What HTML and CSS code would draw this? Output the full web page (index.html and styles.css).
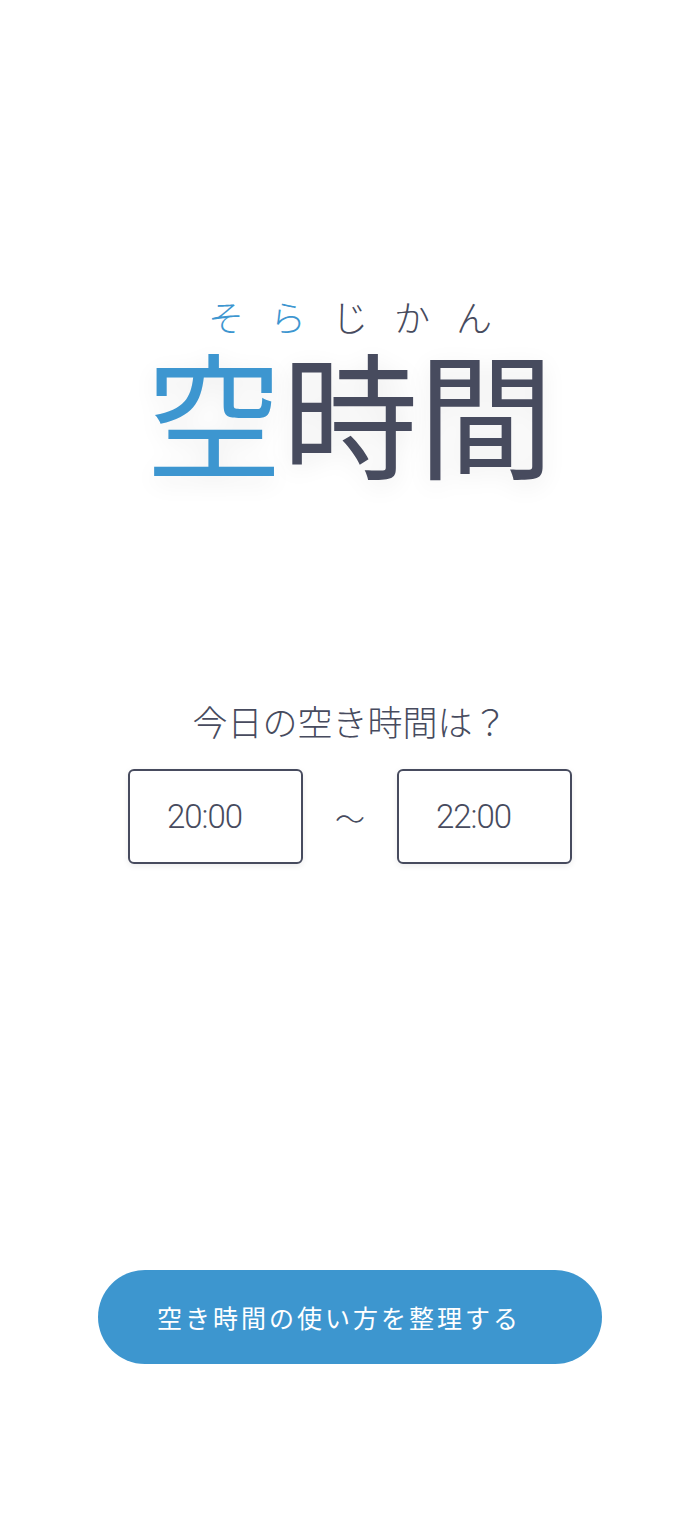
FILE: index.html
```html
<!DOCTYPE html>
<html lang="ja">
<head>
  <meta charset="UTF-8">
  <title>空時間</title>
  <link rel="stylesheet" href="styles.css">
</head>
<body>

<div class="app">
  <div class="logo">
    <div class="logo-kana">
      <span class="accent">そ</span>
      <span class="accent">ら</span>
      <span>じ</span>
      <span>か</span>
      <span>ん</span>
    </div>
    <h1 class="logo-title"><span class="accent">空</span>時間</h1>
  </div>

  <section class="free-time">
    <p class="question">今日の空き時間は？</p>
    <div class="time-range">
      <div class="time-box">20:00</div>
      <span class="tilde">～</span>
      <div class="time-box">22:00</div>
    </div>
  </section>

  <button class="main-btn">空き時間の使い方を整理する</button>
</div>

</body>
</html>
```

FILE: styles.css
```css
body {
  margin: 0;
  padding: 0;
  background-color: #ffffff;
  color: #474b5e;
  font-family: "Noto Sans CJK JP", "Noto Sans", sans-serif;
}

.app {
  display: flex;
  flex-direction: column;
  align-items: center;
  min-height: 100vh;
  box-sizing: border-box;
  padding-top: 292px;
}

.accent {
  color: #3d96d0;
}

.logo {
  text-align: center;
}

.logo-kana {
  display: flex;
  justify-content: center;
  gap: 26px;
  font-size: 36px;
  line-height: 48px;
  font-weight: 300;
}

.logo-title {
  margin: 0;
  font-size: 136px;
  line-height: 140px;
  font-weight: 400;
  text-shadow: 0 6px 24px rgba(0, 0, 0, 0.08);
}

.free-time {
  margin-top: 217px;
  display: flex;
  flex-direction: column;
  align-items: center;
}

.question {
  margin: 0;
  font-size: 35px;
  line-height: 48px;
  font-weight: 300;
}

.time-range {
  margin-top: 24px;
  display: flex;
  align-items: center;
  gap: 32px;
}

.time-box {
  width: 175px;
  height: 95px;
  box-sizing: border-box;
  border: 2px solid #474b5e;
  border-radius: 6px;
  box-shadow: 0 2px 6px rgba(0, 0, 0, 0.08);
  display: flex;
  align-items: center;
  padding-left: 37px;
  font-family: "Roboto", sans-serif;
  font-size: 33px;
  font-weight: 300;
  letter-spacing: -1px;
}

.tilde {
  font-size: 30px;
  font-weight: 300;
}

.main-btn {
  margin-top: 406px;
  width: 504px;
  height: 94px;
  padding: 0 22px 0 0;
  border: none;
  border-radius: 47px;
  background-color: #3d96cf;
  color: #ffffff;
  font-family: "Noto Sans CJK JP", sans-serif;
  font-size: 25px;
  letter-spacing: 3px;
  cursor: pointer;
}
```
